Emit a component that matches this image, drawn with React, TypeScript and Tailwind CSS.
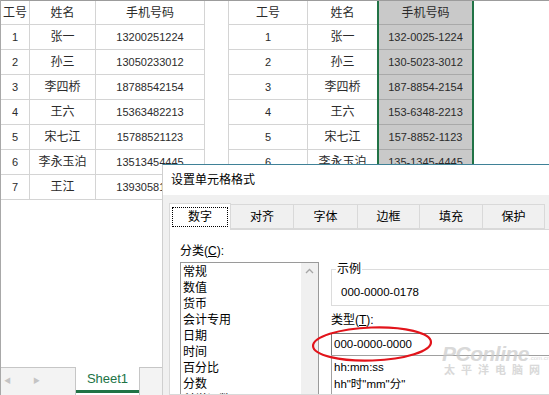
const rows = [
  ['1', '张一', '13200251224', '132-0025-1224'],
  ['2', '孙三', '13050233012', '130-5023-3012'],
  ['3', '李四桥', '18788542154', '187-8854-2154'],
  ['4', '王六', '15363482213', '153-6348-2213'],
  ['5', '宋七江', '15788521123', '157-8852-1123'],
  ['6', '李永玉泊', '13513454445', '135-1345-4445'],
  ['7', '王江', '13930581234', '139-3058-1234'],
];

const categories = ['常规', '数值', '货币', '会计专用', '日期', '时间', '百分比', '分数', '科学记数', '文本'];
const tabs = ['对齐', '字体', '边框', '填充', '保护'];
const tabWidths = ['w-[63px]', 'w-[64px]', 'w-[62px]', 'w-[63px]', 'w-[62px]'];

const cell = 'flex items-center justify-center border-r border-b border-[#d4d4d4] text-[#2b2b2b]';

function LeftTable() {
  return (
    <div className="flex flex-col">
      <div className="flex h-[24px] text-[12px]">
        <div className={`${cell} w-[29px]`}>工号</div>
        <div className={`${cell} w-[66px]`}>姓名</div>
        <div className={`${cell} w-[109px]`}>手机号码</div>
      </div>
      {rows.map((r) => (
        <div key={r[0]} className="flex h-[25px]">
          <div className={`${cell} w-[29px] text-[11px]`}>{r[0]}</div>
          <div className={`${cell} w-[66px] text-[12px]`}>{r[1]}</div>
          <div className={`${cell} w-[109px] text-[11px]`}>{r[2]}</div>
        </div>
      ))}
    </div>
  );
}

function RightTable() {
  return (
    <div className="flex">
      <div className="flex flex-col">
        <div className={`${cell} h-[24px] w-[79px] text-[12px]`}>工号</div>
        {rows.map((r) => (
          <div key={r[0]} className={`${cell} h-[25px] w-[79px] text-[11px]`}>{r[0]}</div>
        ))}
      </div>
      <div className="flex flex-col">
        <div className="flex h-[24px] w-[69px] items-center justify-center border-b border-[#d4d4d4] text-[12px] text-[#2b2b2b]">姓名</div>
        {rows.map((r) => (
          <div key={r[0]} className="flex h-[25px] w-[69px] items-center justify-center border-b border-[#d4d4d4] text-[12px] text-[#2b2b2b]">
            {r[1]}
          </div>
        ))}
      </div>
      <div className="flex w-[97px] flex-col border-x-2 border-[#217346] bg-[#c9c9c9]">
        <div className="flex h-[24px] items-center justify-center border-b border-[#a9a9a9] text-[12px] text-[#2b2b2b]">手机号码</div>
        {rows.map((r) => (
          <div key={r[0]} className="flex h-[25px] items-center justify-center border-b border-[#a9a9a9] text-[11px] text-[#2b2b2b]">
            {r[3]}
          </div>
        ))}
      </div>
    </div>
  );
}

function SheetBar() {
  return (
    <div className="flex h-[28px] shrink-0 border-t border-[#c6c6c6] bg-[#f3f3f3]">
      <div className="flex w-[74px] items-center gap-[22px] pl-[3px] text-[7px] text-[#c4c4c4]">
        <span>◀</span>
        <span>▶</span>
      </div>
      <div className="-mt-px flex w-[65px] flex-col border-x border-[#c6c6c6] bg-white">
        <div className="flex flex-1 items-center justify-center text-[13px] text-[#217346]">Sheet1</div>
        <div className="mb-[2px] h-[3px] bg-[#217346]" />
      </div>
    </div>
  );
}

function FormatDialog() {
  return (
    <div className="absolute left-[161px] top-[164px] flex h-[231px] w-[388px] flex-col overflow-hidden border-t border-l border-[#3f8197] border-l-[#cfcfcf] bg-[#f0f0f0] text-[12px] text-black">
      <div className="flex h-[30px] shrink-0 items-center bg-white pl-[8px] text-[12px]">设置单元格格式</div>
      <div className="flex min-h-0 flex-1 flex-col pl-[6px] pt-[8px]">
        <div className="flex h-[26px] shrink-0 items-end">
          <div className="relative z-10 -mb-px flex h-[27px] w-[62px] items-center justify-center border border-b-0 border-[#d9d9d9] bg-white">
            <div className="flex h-[20px] w-[56px] items-center justify-center border border-dotted border-black">数字</div>
          </div>
          {tabs.map((t, i) => (
            <div key={t} className={`flex h-[25px] ${tabWidths[i]} items-center justify-center border border-l-0 border-[#d9d9d9] bg-[#f0f0f0]`}>
              {t}
            </div>
          ))}
        </div>
        <div className="relative flex min-h-0 flex-1 items-start overflow-hidden border border-r-0 border-[#d9d9d9] bg-white pl-[10px] pt-[13px]">
          <div className="flex w-[139px] shrink-0 flex-col">
            <div className="h-[16px] shrink-0 leading-[16px]">
              分类(<span className="underline">C</span>):
            </div>
            <div className="mt-[3px] flex h-[140px] shrink-0 border border-[#9a9a9a]">
              <div className="flex flex-1 flex-col pl-[2px] pt-[1px] leading-[16px]">
                {categories.map((c) => (
                  <div key={c}>{c}</div>
                ))}
              </div>
              <div className="flex w-[17px] justify-center bg-[#f0f0f0] pt-[5px]">
                <svg width="9" height="6" viewBox="0 0 9 6">
                  <path d="M1 5 L4.5 1.5 L8 5" fill="none" stroke="#a6a6a6" strokeWidth="1.3" />
                </svg>
              </div>
            </div>
          </div>
          <div className="ml-[12px] flex flex-1 shrink-0 flex-col pt-[26px]">
            <div className="relative h-[37px] shrink-0 border border-r-0 border-[#dcdcdc]">
              <div className="absolute -top-[9px] left-[4px] bg-white px-[1px] leading-[16px]">示例</div>
              <div className="pl-[9px] pt-[14px] text-[11.5px] leading-[16px]">000-0000-0178</div>
            </div>
            <div className="mt-[6px] h-[16px] shrink-0 leading-[16px]">
              类型(<span className="underline">T</span>):
            </div>
            <div className="mt-[5px] flex h-[23px] shrink-0 items-center border border-r-0 border-[#7a7a7a] pl-[2px] text-[11.5px]">
              000-0000-0000
            </div>
            <div className="-mt-px h-[60px] shrink-0 border-l border-t border-[#a0a0a0] pl-[2px] pt-[3px] text-[11.5px] leading-[17px]">
              <div>hh:mm:ss</div>
              <div>hh"时"mm"分"</div>
              <div>上午/下午h"时"mm"分"</div>
            </div>
          </div>
          <svg className="pointer-events-none absolute left-[139px] top-[95px]" width="126" height="40" viewBox="0 0 126 40">
            <ellipse cx="63" cy="19" rx="59" ry="16.5" fill="none" stroke="#e2141b" strokeWidth="2.2" transform="rotate(-2 63 19)" />
          </svg>
          <div className="pointer-events-none absolute left-[272px] top-[113px] flex flex-col items-start leading-none text-[#c9c9c9] opacity-70">
            <div className="flex items-end">
              <span className="font-['Liberation_Sans',sans-serif] text-[21px] font-bold italic tracking-[-0.5px]">PConline</span>
              <span className="mb-[3px] text-[6px]">.com.cn</span>
            </div>
            <div className="mt-[1px] pl-[2px] text-[11px] font-bold tracking-[6px]">太平洋电脑网</div>
          </div>
        </div>
      </div>
    </div>
  );
}

export default function App() {
  return (
    <div className="relative flex h-[395px] w-[549px] flex-col overflow-hidden border-l border-[#a8a8a8] bg-white font-['Liberation_Sans','Noto_Sans_CJK_SC',sans-serif]">
      <div className="flex shrink-0 border-t border-[#9c9c9c]">
        <LeftTable />
        <div className="w-[24px] border-r border-[#d4d4d4]" />
        <RightTable />
      </div>
      <div className="flex-1" />
      <SheetBar />
      <FormatDialog />
    </div>
  );
}
